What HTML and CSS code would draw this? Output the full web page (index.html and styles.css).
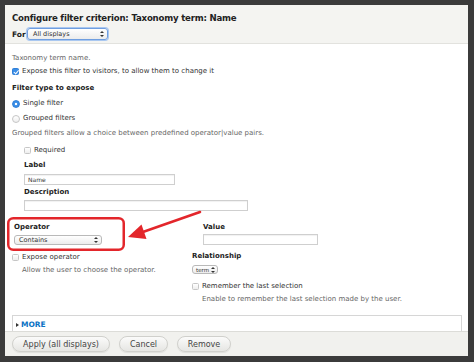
FILE: index.html
```html
<!DOCTYPE html>
<html lang="en">
<head>
    <meta charset="UTF-8">
    <title>Configure filter criterion</title>
    <link rel="stylesheet" href="styles.css">
</head>
<body>
    <div class="dialog">
        <div class="dialog-head">
            <h1 class="title">Configure filter criterion: Taxonomy term: Name</h1>
            <div class="for-row">
                <span class="for-label">For</span>
                <span class="select select-focus select-displays">All displays<i class="arrows"></i></span>
            </div>
        </div>

        <div class="dialog-body">
            <p class="help">Taxonomy term name.</p>
            <div class="check-row"><span class="box checked"></span>Expose this filter to visitors, to allow them to change it</div>

            <h2 class="field-title first">Filter type to expose</h2>
            <div class="radio-row"><span class="radio selected"></span>Single filter</div>
            <div class="radio-row"><span class="radio"></span>Grouped filters</div>
            <p class="help row15">Grouped filters allow a choice between predefined operator|value pairs.</p>

            <div class="indent">
                <div class="check-row required"><span class="box"></span>Required</div>
                <h2 class="field-title">Label</h2>
                <div class="input input-label">Name</div>
                <h2 class="field-title desc-title">Description</h2>
                <div class="input input-desc"></div>
            </div>

            <div class="op-grid">
                <div class="op-col">
                    <div class="operator">
                        <h2 class="field-title">Operator</h2>
                        <span class="select select-op">Contains<i class="arrows"></i></span>
                    </div>
                    <div class="check-row expose"><span class="box"></span>Expose operator</div>
                    <p class="help sub">Allow the user to choose the operator.</p>
                </div>
                <div class="val-col">
                    <div class="value">
                        <h2 class="field-title">Value</h2>
                        <div class="input input-value"></div>
                    </div>
                    <h2 class="field-title rel-title">Relationship</h2>
                    <span class="select select-term">term<i class="arrows"></i></span>
                    <div class="check-row remember"><span class="box"></span>Remember the last selection</div>
                    <p class="help sub">Enable to remember the last selection made by the user.</p>
                </div>
            </div>

            <div class="more">
                <span class="more-toggle"><i class="tri"></i>MORE</span>
            </div>
        </div>

        <div class="dialog-foot">
            <button class="btn btn-apply">Apply (all displays)</button>
            <button class="btn btn-cancel">Cancel</button>
            <button class="btn btn-remove">Remove</button>
        </div>
    </div>

    <!-- red annotation drawn over the screenshot -->
    <svg class="annotation" width="474" height="362" viewBox="0 0 474 362">
        <rect x="8.25" y="218.25" width="115.5" height="31.5" rx="5" fill="none" stroke="#e3262b" stroke-width="2.5"/>
        <line x1="200" y1="212" x2="140" y2="233" stroke="#e3262b" stroke-width="2.6" stroke-linecap="round"/>
        <polygon points="128,237 141.5,224.5 146.5,239" fill="#e3262b"/>
    </svg>
</body>
</html>
```

FILE: styles.css
```css
body {
    margin: 0;
    width: 474px;
    height: 362px;
    background: #3b3b3b;
    font-family: "DejaVu Sans", Verdana, sans-serif;
    color: #333;
    position: relative;
    overflow: hidden;
}
h1, h2, p {
    margin: 0;
}
.dialog {
    position: absolute;
    left: 5px;
    top: 5px;
    width: 463px;
    height: 351px;
    display: flex;
    flex-direction: column;
    background: #fff;
}
.dialog-head {
    background: #f4f4f1;
    border-bottom: 1px solid #e2e2de;
    height: 38px;
    padding: 0 7px;
}
.title {
    font-size: 8.6px;
    letter-spacing: -0.2px;
    font-weight: bold;
    color: #222;
    line-height: 12px;
    margin-top: 7px;
}
.for-row {
    display: flex;
    align-items: center;
    margin-top: 4px;
    font-size: 7.5px;
    font-weight: bold;
    color: #222;
}
.for-label {
    width: 15px;
}

/* selects */
.select {
    display: inline-flex;
    align-items: center;
    justify-content: space-between;
    box-sizing: border-box;
    font-size: 6.5px;
    font-weight: normal;
    color: #333;
    background: linear-gradient(#ffffff, #ececec);
    border: 1px solid #b9b9b9;
    border-radius: 3px;
    padding: 0 3px 0 5px;
}
.select-focus {
    border-color: #6f9ee0;
    box-shadow: 0 0 0 1px #a9c7f0;
}
.select-displays {
    width: 81px;
    height: 12px;
}
.select-op {
    width: 88px;
    height: 10px;
    margin-top: 1px;
    padding-left: 4px;
}
.select-term {
    width: 26px;
    height: 9px;
    margin-top: 2px;
    padding: 0 2px 0 3px;
    font-size: 5.5px;
}
.arrows {
    position: relative;
    display: inline-block;
    width: 4px;
    height: 6px;
}
.arrows::before,
.arrows::after {
    content: "";
    position: absolute;
    left: 0;
    border-left: 2px solid transparent;
    border-right: 2px solid transparent;
}
.arrows::before {
    top: 0;
    border-bottom: 2.5px solid #333;
}
.arrows::after {
    bottom: 0;
    border-top: 2.5px solid #333;
}

.dialog-body {
    flex: 1;
    overflow: hidden;
    padding: 8px 6px 0 7px;
    font-size: 7px;
    color: #333;
}
.help {
    line-height: 13px;
    color: #666;
}
.help.row15 {
    line-height: 15px;
}
.help.sub {
    padding-left: 10px;
}
.field-title {
    font-size: 7px;
    font-weight: bold;
    color: #222;
    line-height: 15px;
}
.field-title.first {
    margin-top: 3px;
}
.check-row,
.radio-row {
    display: flex;
    align-items: center;
    line-height: 13px;
    color: #333;
}
.radio-row {
    line-height: 15px;
}
.box,
.radio {
    box-sizing: border-box;
    width: 7px;
    height: 7px;
    margin-right: 3px;
    border: 1px solid #c6c6c6;
    background: linear-gradient(#fff, #eee);
    flex-shrink: 0;
}
.box {
    border-radius: 1.5px;
}
.radio {
    width: 8px;
    height: 8px;
    border-radius: 50%;
}
.box.checked {
    border-color: #2f7fd8;
    background: #3b8ee6;
    position: relative;
}
.box.checked::after {
    content: "";
    position: absolute;
    left: 1.5px;
    top: 0;
    width: 1.5px;
    height: 3.5px;
    border: solid #fff;
    border-width: 0 1px 1px 0;
    transform: rotate(40deg);
}
.radio.selected {
    border-color: #2f7fd8;
    background: radial-gradient(circle, #fff 0 1.3px, #3b8ee6 1.6px);
}

.indent {
    padding-left: 12px;
}
.check-row.required {
    margin-top: 2px;
    line-height: 15px;
}
.input {
    box-sizing: border-box;
    height: 11px;
    border: 1px solid #cfcfcf;
    box-shadow: inset 0 1px 1px rgba(0, 0, 0, 0.06);
    font-size: 6px;
    line-height: 9px;
    padding-left: 3px;
    color: #333;
    margin-top: 1px;
}
.input-label {
    width: 151px;
}
.input-desc {
    width: 224px;
}
.desc-title {
    line-height: 13px;
    margin-top: 1px;
}

.op-grid {
    display: grid;
    grid-template-columns: 180px 1fr;
    margin-top: 10px;
}
.operator {
    padding-left: 2px;
}
.operator .field-title,
.value .field-title {
    line-height: 13px;
}
.check-row.expose {
    margin-top: 6px;
}
.value {
    padding-left: 11px;
}
.input-value {
    width: 115px;
    margin-top: 0;
}
.rel-title {
    line-height: 13px;
    margin-top: 5px;
}
.check-row.remember {
    margin-top: 6px;
}

.more {
    margin-top: 9px;
    border: 1px solid #d6d6d6;
    height: 30px;
    padding: 3px 3px;
}
.more-toggle {
    display: inline-flex;
    align-items: center;
    font-size: 7.5px;
    font-weight: bold;
    color: #0a72c4;
    line-height: 12px;
}
.tri {
    width: 0;
    height: 0;
    border-left: 3px solid #333;
    border-top: 2px solid transparent;
    border-bottom: 2px solid transparent;
    margin-right: 2px;
}

.dialog-foot {
    height: 24px;
    background: #f1f1ee;
    border-top: 1px solid #dcdcd8;
    display: flex;
    align-items: center;
    gap: 9px;
    padding-left: 7px;
}
.btn {
    font-family: inherit;
    height: 16px;
    padding: 0;
    border: 1px solid #d0d0cc;
    border-radius: 8px;
    background: linear-gradient(#fbfbfa, #e6e6e3);
    box-shadow: 0 1px 1px rgba(0, 0, 0, 0.08);
    font-size: 8px;
    color: #444;
}
.btn-apply {
    width: 98px;
}
.btn-cancel {
    width: 49px;
}
.btn-remove {
    width: 54px;
}

.annotation {
    position: absolute;
    left: 0;
    top: 0;
    pointer-events: none;
}
```
